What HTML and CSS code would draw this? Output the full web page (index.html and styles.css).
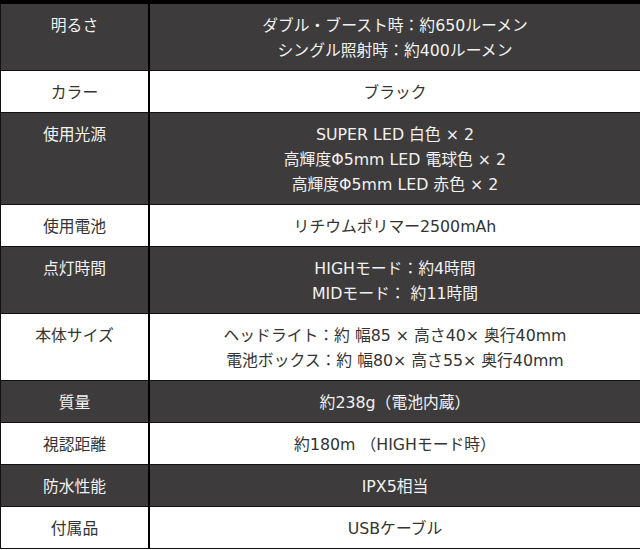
FILE: index.html
```html
<!DOCTYPE html>
<html lang="ja">
<head>
<meta charset="utf-8">
<title>スペック</title>
<link rel="stylesheet" href="styles.css">
</head>
<body>
<table class="spec">
  <tbody>
    <tr class="dark"><th>明るさ</th><td>ダブル・ブースト時：約650ルーメン<br>シングル照射時：約400ルーメン</td></tr>
    <tr class="light"><th>カラー</th><td>ブラック</td></tr>
    <tr class="dark"><th>使用光源</th><td>SUPER LED 白色 × 2<br>高輝度Φ5mm LED 電球色 × 2<br>高輝度Φ5mm LED 赤色 × 2</td></tr>
    <tr class="light"><th>使用電池</th><td>リチウムポリマー2500mAh</td></tr>
    <tr class="dark"><th>点灯時間</th><td>HIGHモード：約4時間<br>MIDモード： 約11時間</td></tr>
    <tr class="light"><th>本体サイズ</th><td>ヘッドライト：約 幅85 × 高さ40× 奥行40mm<br>電池ボックス：約 幅80× 高さ55× 奥行40mm</td></tr>
    <tr class="dark"><th>質量</th><td>約238g（電池内蔵）</td></tr>
    <tr class="light"><th>視認距離</th><td>約180m （HIGHモード時）</td></tr>
    <tr class="dark"><th>防水性能</th><td>IPX5相当</td></tr>
    <tr class="light"><th>付属品</th><td>USBケーブル</td></tr>
  </tbody>
</table>
</body>
</html>
```

FILE: styles.css
```css
html, body {
  margin: 0;
  padding: 0;
  background: #ffffff;
}

.spec {
  width: 640px;
  border-collapse: collapse;
  table-layout: fixed;
  border-top: 4px solid #000;
  font-family: "DejaVu Sans", "Noto Sans CJK JP", sans-serif;
  font-size: 15.8px;
  line-height: 25px;
}

.spec th,
.spec td {
  border: 1px solid #111;
  padding: 9px 4px 7px;
  text-align: center;
  vertical-align: top;
  font-weight: normal;
}

.spec th {
  width: 139px;
  border-right: 2px solid #000;
}

.spec td {
  border-right: none;
}

.dark th,
.dark td {
  background: #3d3b3b;
  color: #f2f2f2;
}

.light th,
.light td {
  background: #ffffff;
  color: #333333;
}
```
